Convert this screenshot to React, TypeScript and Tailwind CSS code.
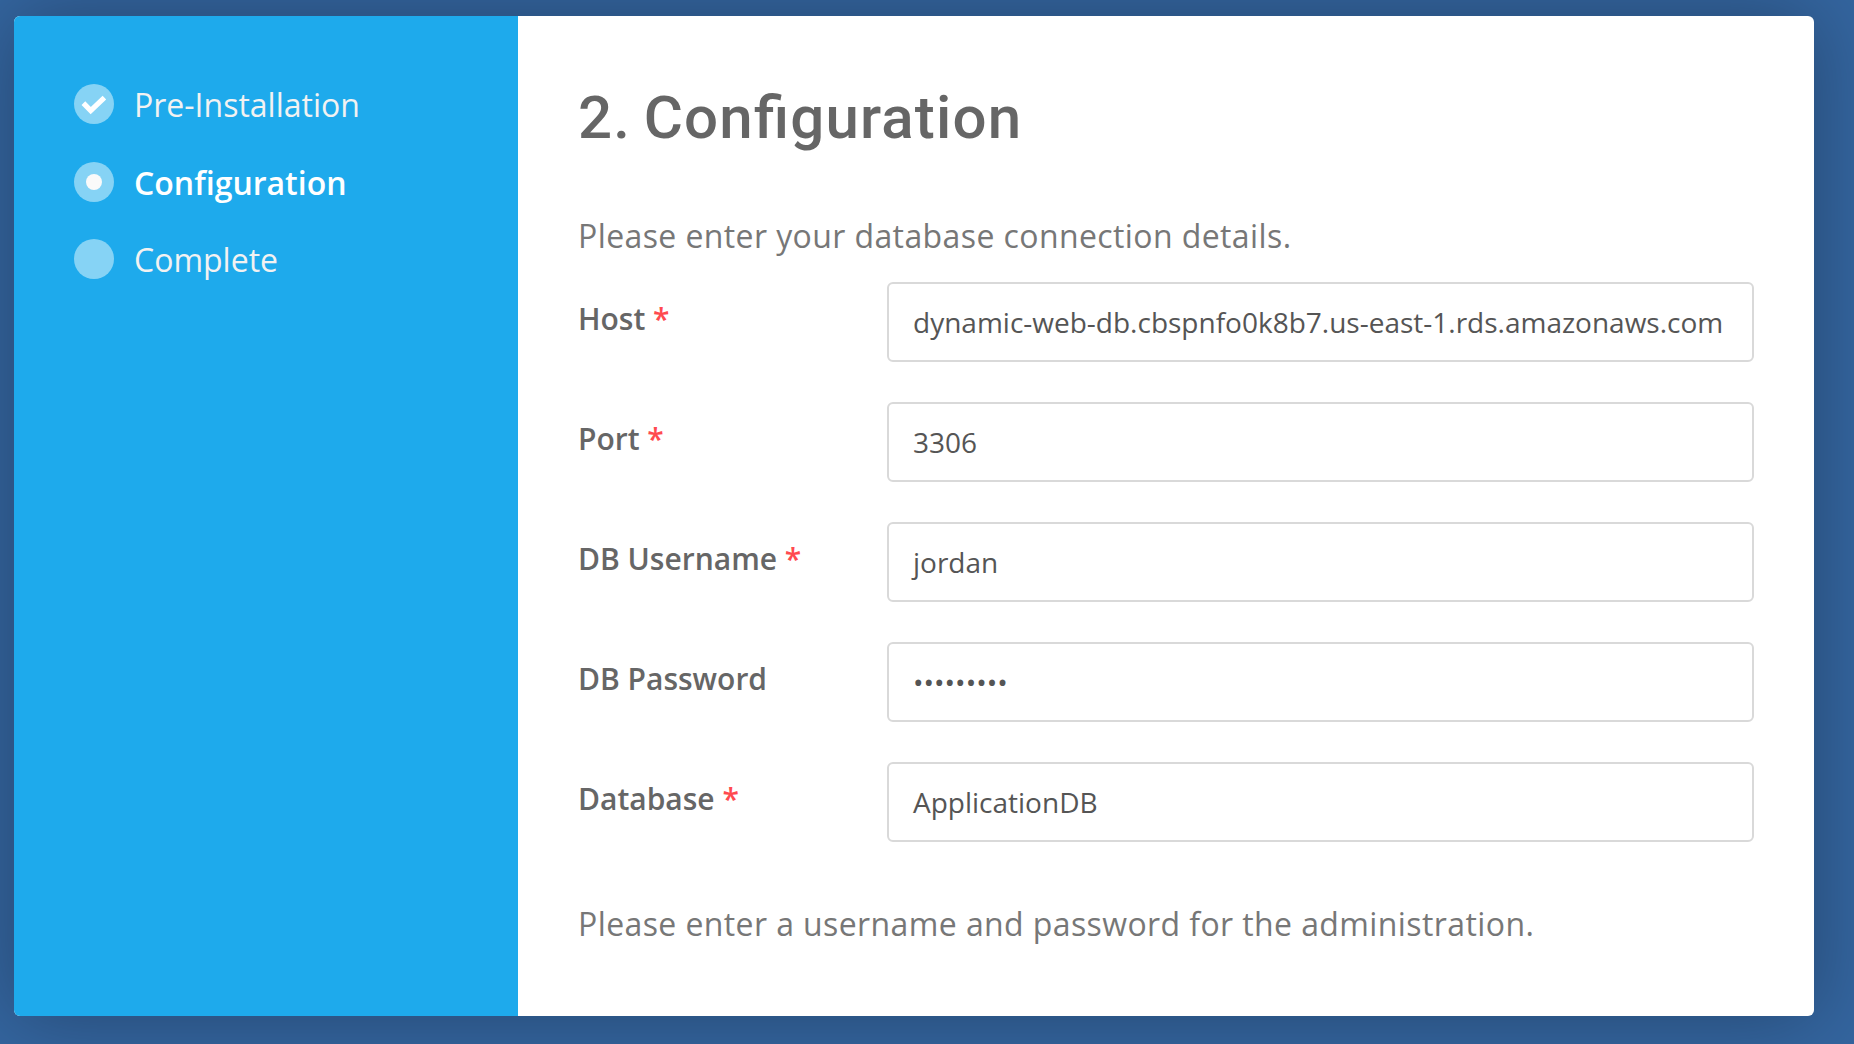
import type { ReactNode } from 'react'

type StepState = 'done' | 'current' | 'pending'

const steps: { label: string; state: StepState }[] = [
  { label: 'Pre-Installation', state: 'done' },
  { label: 'Configuration', state: 'current' },
  { label: 'Complete', state: 'pending' },
]

function StepMarker({ state }: { state: StepState }) {
  return (
    <span className="flex size-10 shrink-0 items-center justify-center rounded-full bg-[#86d3f5]">
      {state === 'done' && (
        <svg viewBox="0 0 26 22" className="h-[22px] w-[26px]" fill="none">
          <path d="M2.4 10.2 L9.7 17.6 L23.4 4.7" stroke="#fff" strokeWidth="5.2" />
        </svg>
      )}
      {state === 'current' && <span className="size-4 rounded-full bg-[#fafafa]" />}
    </span>
  )
}

function Step({ label, state }: { label: string; state: StepState }) {
  const text = state === 'current' ? 'font-semibold text-white' : 'text-[#f2f2f2]'
  return (
    <li className="flex h-[77.5px] items-start gap-5">
      <StepMarker state={state} />
      <span className={`pt-px text-[32px] leading-10 whitespace-nowrap ${text}`}>{label}</span>
    </li>
  )
}

function Field({ label, required = false, children }: { label: string; required?: boolean; children: ReactNode }) {
  return (
    <div className="flex items-start">
      <label className="w-[309px] shrink-0 pt-4 text-[30px] leading-[42px] font-semibold whitespace-nowrap text-[#666]">
        {label}
        {required && <span className="text-[#ff4a4f]"> *</span>}
      </label>
      <div className="flex h-20 flex-1 items-center rounded-md border-2 border-[#d9d9d9] bg-white px-6 text-[28px] leading-10 whitespace-nowrap text-[#555]">
        {children}
      </div>
    </div>
  )
}

export default function App() {
  return (
    <div className="h-[1044px] w-full overflow-hidden bg-[#34659f] pt-4 pl-3.5 font-['Open_Sans',sans-serif]">
      <main className="flex h-[1000px] w-[1800px] overflow-hidden rounded-md bg-white shadow-[0_0_80px_rgba(0,0,0,0.3)]">
        <aside className="w-[504px] shrink-0 bg-[#1eaaec] px-[60px] pt-[68px]">
          <ol>
            {steps.map((s) => (
              <Step key={s.label} label={s.label} state={s.state} />
            ))}
          </ol>
        </aside>
        <section className="flex-1 px-[60px] pt-[66px]">
          <h1 className="h-[130px] font-['Roboto',sans-serif] text-[60px] leading-[72px] font-medium tracking-[1.2px] whitespace-nowrap text-[#666] [font-feature-settings:'liga'] [word-spacing:-3.6px]">
            2. Configuration
          </h1>
          <p className="h-[70px] text-[32px] leading-[48px] tracking-[0.4px] whitespace-nowrap text-[#777]">
            Please enter your database connection details.
          </p>
          <form className="flex flex-col gap-10">
            <Field label="Host" required>
              dynamic-web-db.cbspnfo0k8b7.us-east-1.rds.amazonaws.com
            </Field>
            <Field label="Port" required>
              3306
            </Field>
            <Field label="DB Username" required>
              jordan
            </Field>
            <Field label="DB Password">
              <span>•••••••••</span>
            </Field>
            <Field label="Database" required>
              ApplicationDB
            </Field>
          </form>
          <p className="pt-[58px] text-[32px] leading-[48px] tracking-[0.4px] whitespace-nowrap text-[#777]">
            Please enter a username and password for the administration.
          </p>
        </section>
      </main>
    </div>
  )
}
